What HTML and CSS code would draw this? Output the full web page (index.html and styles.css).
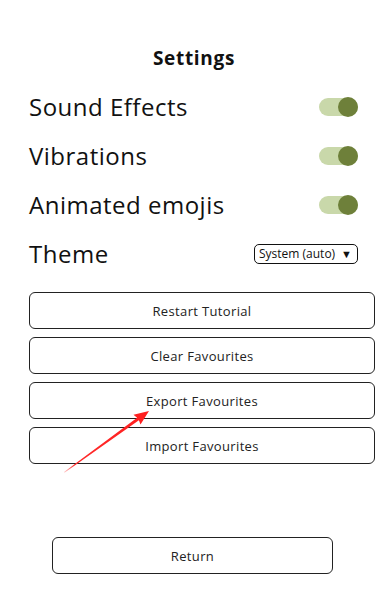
FILE: index.html
```html
<!DOCTYPE html>
<html>
<head>
<meta charset="utf-8">
<link rel="stylesheet" href="styles.css">
</head>
<body>
<div class="page">
  <h1 class="title">Settings</h1>
  <div class="rows">
    <div class="row"><span class="label">Sound Effects</span><span class="toggle"><span class="knob"></span></span></div>
    <div class="row"><span class="label">Vibrations</span><span class="toggle"><span class="knob"></span></span></div>
    <div class="row"><span class="label">Animated emojis</span><span class="toggle"><span class="knob"></span></span></div>
    <div class="row"><span class="label">Theme</span><span class="select"><span>System (auto)</span><span class="caret">▼</span></span></div>
  </div>
  <div class="buttons">
    <div class="btn">Restart Tutorial</div>
    <div class="btn">Clear Favourites</div>
    <div class="btn">Export Favourites</div>
    <div class="btn">Import Favourites</div>
  </div>
  <div class="return-wrap"><div class="btn return">Return</div></div>
  <svg class="arrow" width="385" height="602" viewBox="0 0 385 602">
    <defs>
      <linearGradient id="g" x1="64" y1="472" x2="149" y2="411" gradientUnits="userSpaceOnUse">
        <stop offset="0" stop-color="#ff3b3b" stop-opacity="0.25"/>
        <stop offset="0.12" stop-color="#ff2a2a"/>
        <stop offset="1" stop-color="#ff1f1f"/>
      </linearGradient>
    </defs>
    <polygon points="64,472 137.1,417.8 133.5,414.7 149,411 140.5,424.5 138.9,420.2 64.5,472.8" fill="url(#g)"/>
  </svg>
</div>
</body>
</html>
```
FILE: styles.css
```css
html, body {
  margin: 0;
  padding: 0;
  background: #fff;
}
.page {
  position: relative;
  width: 385px;
  height: 602px;
  font-family: "Open Sans", "Noto Sans", sans-serif;
  color: #111;
}
.title {
  margin: 0;
  padding-top: 46px;
  height: 24px;
  line-height: 24px;
  font-size: 19px;
  font-weight: 700;
  letter-spacing: 0.7px;
  text-align: center;
  padding-left: 3px;
}
.rows {
  display: flex;
  flex-direction: column;
  margin-top: 12px;
  padding: 0 27px 0 29px;
}
.row {
  height: 49px;
  display: flex;
  align-items: center;
  justify-content: space-between;
}
.label {
  font-size: 24px;
  line-height: 30px;
  letter-spacing: 0.5px;
}
.toggle {
  position: relative;
  width: 39px;
  height: 18px;
  border-radius: 9px;
  background: #c9d8aa;
  display: block;
}
.knob {
  position: absolute;
  right: 0;
  top: -1px;
  width: 20px;
  height: 20px;
  border-radius: 50%;
  background: #6e803a;
}
.select {
  box-sizing: border-box;
  width: 104px;
  height: 20px;
  border: 1px solid #111;
  border-radius: 5px;
  font-size: 12px;
  line-height: 18px;
  padding: 0 5px 0 4px;
  display: flex;
  justify-content: space-between;
  align-items: center;
}
.caret {
  font-size: 11px;
}
.buttons {
  display: flex;
  flex-direction: column;
  gap: 8px;
  margin: 14px 10px 0 29px;
}
.btn {
  box-sizing: border-box;
  height: 37px;
  border: 1px solid #222;
  border-radius: 6px;
  display: flex;
  align-items: center;
  justify-content: center;
  font-size: 13px;
  letter-spacing: 0.35px;
  color: #222;
}
.return-wrap {
  display: flex;
  justify-content: center;
  margin-top: 73px;
}
.return {
  width: 281px;
}
.arrow {
  position: absolute;
  left: 0;
  top: 0;
  pointer-events: none;
}
```
